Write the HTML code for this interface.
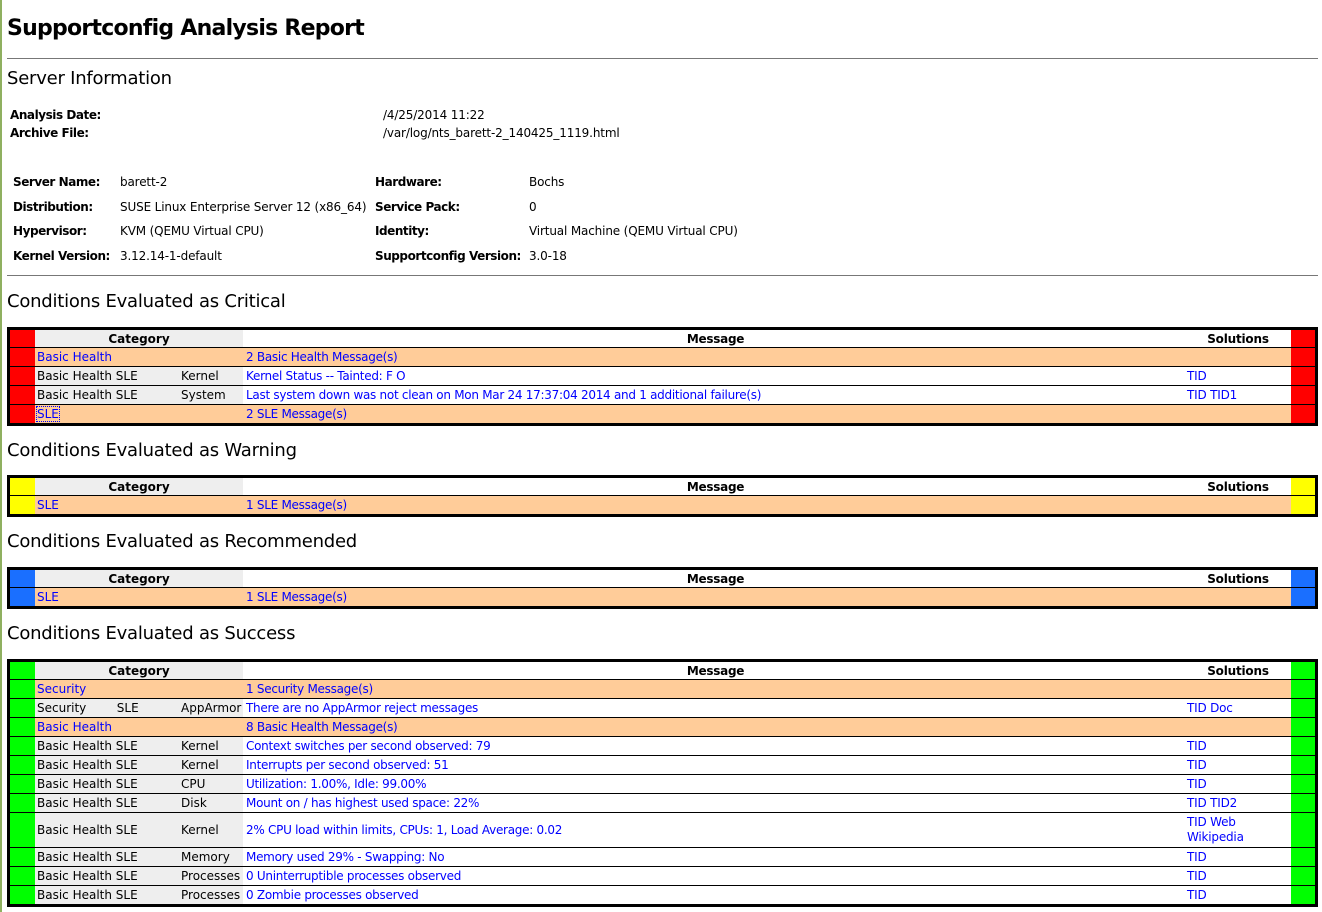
<!DOCTYPE html>
<html><head><meta charset="utf-8"><style>
*{margin:0;padding:0;box-sizing:border-box}
body{width:1322px;height:912px;background:#fff;font-family:"DejaVu Sans","Liberation Sans",sans-serif;font-size:12px;color:#000;position:relative;overflow:hidden}
.gl{position:absolute;left:0;top:0;width:2px;height:912px;background:#8fb060}
.a{position:absolute;white-space:nowrap;letter-spacing:-0.15px}
h1{position:absolute;left:7px;top:16px;font-size:22px;font-weight:bold;letter-spacing:-0.75px}
.h2{position:absolute;left:7px;font-size:18px;font-weight:normal;letter-spacing:-0.23px}
.hr{position:absolute;left:7px;width:1311px;height:1px;background:#777}
b{font-weight:bold;letter-spacing:-0.45px}
.t{position:absolute;left:7px;width:1311px;border:3px solid #000}
.r{display:flex;height:19px;border-bottom:1px solid #000;line-height:19px}
.r:last-child{border-bottom:none;height:18px}
.r>div{flex:none;overflow:hidden;white-space:nowrap;padding-left:2px}
.c{width:25px}.k{width:143px;background:#eee}.s{width:65px;background:#eee;padding-left:3px!important}.m{width:942px;letter-spacing:-0.28px;padding-left:3px!important}.o{width:106px;letter-spacing:-0.2px}.e{width:24px}
.hd{height:18px;line-height:18px;font-weight:bold}
.hd .k2{width:208px;background:#eee;text-align:center;padding:0}
.hd .m{text-align:center;padding:0}.hd .o{text-align:center;padding:0}
.sum .k2{width:208px;background:#fc9}.sum .m,.sum .o{background:#fc9}
.l{color:#00f}
.red .c,.red .e{background:#f00}.yel .c,.yel .e{background:#ff0}.blu .c,.blu .e{background:#1a6fff}.grn .c,.grn .e{background:#0f0}
.tall{height:35px!important;line-height:15px}
.tall>div{padding-top:2px}
.tall .k,.tall .s,.tall .m2{padding-top:10px}
</style></head><body>
<div class="gl"></div>
<h1>Supportconfig Analysis Report</h1>
<div class="hr" style="top:58px"></div>
<div class="h2" style="top:68px">Server Information</div>
<div class="a" style="left:10px;top:108px"><b>Analysis Date:</b></div>
<div class="a" style="left:383px;top:108px">/4/25/2014 11:22</div>
<div class="a" style="left:10px;top:126px"><b>Archive File:</b></div>
<div class="a" style="left:383px;top:126px">/var/log/nts_barett-2_140425_1119.html</div>

<div class="a" style="left:13px;top:175px"><b>Server Name:</b></div>
<div class="a" style="left:120px;top:175px">barett-2</div>
<div class="a" style="left:375px;top:175px"><b>Hardware:</b></div>
<div class="a" style="left:529px;top:175px">Bochs</div>
<div class="a" style="left:13px;top:200px"><b>Distribution:</b></div>
<div class="a" style="left:120px;top:200px">SUSE Linux Enterprise Server 12 (x86_64)</div>
<div class="a" style="left:375px;top:200px"><b>Service Pack:</b></div>
<div class="a" style="left:529px;top:200px">0</div>
<div class="a" style="left:13px;top:224px"><b>Hypervisor:</b></div>
<div class="a" style="left:120px;top:224px">KVM (QEMU Virtual CPU)</div>
<div class="a" style="left:375px;top:224px"><b>Identity:</b></div>
<div class="a" style="left:529px;top:224px">Virtual Machine (QEMU Virtual CPU)</div>
<div class="a" style="left:13px;top:249px"><b>Kernel Version:</b></div>
<div class="a" style="left:120px;top:249px">3.12.14-1-default</div>
<div class="a" style="left:375px;top:249px"><b>Supportconfig Version:</b></div>
<div class="a" style="left:529px;top:249px">3.0-18</div>
<div class="hr" style="top:275px"></div>

<div class="h2" style="top:291px">Conditions Evaluated as Critical</div>
<div class="t red" style="top:327px">
<div class="r hd"><div class="c"></div><div class="k2">Category</div><div class="m">Message</div><div class="o">Solutions</div><div class="e"></div></div>
<div class="r sum"><div class="c"></div><div class="k2 l" style="padding-left:2px">Basic Health</div><div class="m l">2 Basic Health Message(s)</div><div class="o"></div><div class="e"></div></div>
<div class="r"><div class="c"></div><div class="k">Basic Health SLE</div><div class="s">Kernel</div><div class="m l">Kernel Status -- Tainted: F O</div><div class="o l">TID</div><div class="e"></div></div>
<div class="r"><div class="c"></div><div class="k">Basic Health SLE</div><div class="s">System</div><div class="m l">Last system down was not clean on Mon Mar 24 17:37:04 2014 and 1 additional failure(s)</div><div class="o l">TID TID1</div><div class="e"></div></div>
<div class="r sum"><div class="c"></div><div class="k2 l" style="padding-left:2px"><span style="outline:1px dotted #00f">SLE</span></div><div class="m l">2 SLE Message(s)</div><div class="o"></div><div class="e"></div></div>
</div>

<div class="h2" style="top:440px">Conditions Evaluated as Warning</div>
<div class="t yel" style="top:475px">
<div class="r hd"><div class="c"></div><div class="k2">Category</div><div class="m">Message</div><div class="o">Solutions</div><div class="e"></div></div>
<div class="r sum"><div class="c"></div><div class="k2 l" style="padding-left:2px">SLE</div><div class="m l">1 SLE Message(s)</div><div class="o"></div><div class="e"></div></div>
</div>

<div class="h2" style="top:531px">Conditions Evaluated as Recommended</div>
<div class="t blu" style="top:567px">
<div class="r hd"><div class="c"></div><div class="k2">Category</div><div class="m">Message</div><div class="o">Solutions</div><div class="e"></div></div>
<div class="r sum"><div class="c"></div><div class="k2 l" style="padding-left:2px">SLE</div><div class="m l">1 SLE Message(s)</div><div class="o"></div><div class="e"></div></div>
</div>

<div class="h2" style="top:623px">Conditions Evaluated as Success</div>
<div class="t grn" style="top:659px">
<div class="r hd"><div class="c"></div><div class="k2">Category</div><div class="m">Message</div><div class="o">Solutions</div><div class="e"></div></div>
<div class="r sum"><div class="c"></div><div class="k2 l" style="padding-left:2px">Security</div><div class="m l">1 Security Message(s)</div><div class="o"></div><div class="e"></div></div>
<div class="r"><div class="c"></div><div class="k">Security&nbsp;&nbsp;&nbsp;&nbsp;&nbsp;&nbsp;&nbsp;&nbsp;SLE</div><div class="s">AppArmor</div><div class="m l">There are no AppArmor reject messages</div><div class="o l">TID Doc</div><div class="e"></div></div>
<div class="r sum"><div class="c"></div><div class="k2 l" style="padding-left:2px">Basic Health</div><div class="m l">8 Basic Health Message(s)</div><div class="o"></div><div class="e"></div></div>
<div class="r"><div class="c"></div><div class="k">Basic Health SLE</div><div class="s">Kernel</div><div class="m l">Context switches per second observed: 79</div><div class="o l">TID</div><div class="e"></div></div>
<div class="r"><div class="c"></div><div class="k">Basic Health SLE</div><div class="s">Kernel</div><div class="m l">Interrupts per second observed: 51</div><div class="o l">TID</div><div class="e"></div></div>
<div class="r"><div class="c"></div><div class="k">Basic Health SLE</div><div class="s">CPU</div><div class="m l">Utilization: 1.00%, Idle: 99.00%</div><div class="o l">TID</div><div class="e"></div></div>
<div class="r"><div class="c"></div><div class="k">Basic Health SLE</div><div class="s">Disk</div><div class="m l">Mount on / has highest used space: 22%</div><div class="o l">TID TID2</div><div class="e"></div></div>
<div class="r tall"><div class="c"></div><div class="k">Basic Health SLE</div><div class="s">Kernel</div><div class="m l m2">2% CPU load within limits, CPUs: 1, Load Average: 0.02</div><div class="o l">TID Web<br>Wikipedia</div><div class="e"></div></div>
<div class="r"><div class="c"></div><div class="k">Basic Health SLE</div><div class="s">Memory</div><div class="m l">Memory used 29% - Swapping: No</div><div class="o l">TID</div><div class="e"></div></div>
<div class="r"><div class="c"></div><div class="k">Basic Health SLE</div><div class="s">Processes</div><div class="m l">0 Uninterruptible processes observed</div><div class="o l">TID</div><div class="e"></div></div>
<div class="r"><div class="c"></div><div class="k">Basic Health SLE</div><div class="s">Processes</div><div class="m l">0 Zombie processes observed</div><div class="o l">TID</div><div class="e"></div></div>
</div>
</body></html>
